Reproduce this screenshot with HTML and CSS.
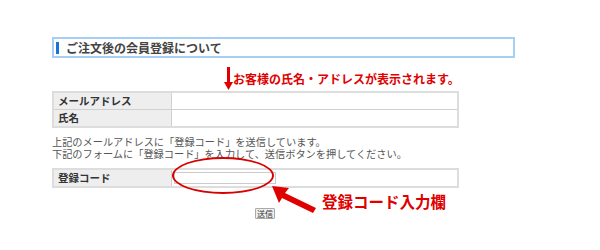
FILE: index.html
```html
<!DOCTYPE html>
<html lang="ja">
<head>
<meta charset="utf-8">
<link rel="stylesheet" href="styles.css">
</head>
<body>
<div class="page">
  <h2 class="title"><span class="bar"></span>ご注文後の会員登録について</h2>
  <div class="note">
    <svg class="down" width="9" height="24" viewBox="0 0 9 24"><rect x="3" y="0" width="3" height="17" fill="#e00000"/><polygon points="0,15 9,15 4.5,23" fill="#e00000"/></svg>
    <span class="note-text">お客様の氏名・アドレスが表示されます。</span>
  </div>
  <table class="info">
    <tr><th>メールアドレス</th><td></td></tr>
    <tr><th>氏名</th><td></td></tr>
  </table>
  <p class="desc">上記のメールアドレスに「登録コード」を送信しています。<br>下記のフォームに「登録コード」を入力して、送信ボタンを押してください。</p>
  <div class="code-area">
    <table class="info code">
      <tr><th>登録コード</th><td><span class="input"></span></td></tr>
    </table>
    <span class="ellipse"></span>
    <svg class="big-arrow" width="46" height="28" viewBox="0 0 46 28"><polygon points="0,0 17,2 13,7 44,22 41,27 10,12 7,17" fill="#e00000"/></svg>
    <span class="code-label">登録コード入力欄</span>
    <div class="btn-row"><button class="send">送信</button></div>
  </div>
</div>
</body>
</html>
```
FILE: styles.css
```css
html, body { margin: 0; padding: 0; background: #fff; }
body { font-family: "Noto Sans CJK JP", "Noto Sans", sans-serif; color: #333; }
.page { padding: 37px 0 0 52px; width: 463px; }
.title {
  margin: 0; height: 17px; border: 2px solid #a6cff5;
  display: flex; align-items: center;
  font-size: 12px; font-weight: bold; color: #444; line-height: 17px;
}
.bar { width: 3px; height: 12px; background: #1a73d9; margin: 0 7px 0 2px; }
.note { display: flex; align-items: flex-start; margin: 9px 0 0 172px; height: 24px; }
.down { display: block; margin-top: 0; }
.note-text { color: #e00000; font-weight: bold; font-size: 12px; line-height: 14px; margin: 5px 0 0 0; white-space: nowrap; }
.info { border-collapse: collapse; width: 407px; border: 2px solid #ddd; }
.info th, .info td { border: 1px solid #d0d0d0; height: 16px; padding: 0 4px; font-size: 10.5px; line-height: 14px; }
.info th { width: 109px; background: #eee; text-align: left; font-weight: bold; color: #333; }
.info td { background: #fff; }
.desc { margin: 8px 0 0; font-size: 10.2px; line-height: 12px; color: #555; white-space: nowrap; }
.code-area { position: relative; margin-top: 8px; }
.code th, .code td { height: 16px; }
.code td { padding: 0 2px; }
.input { display: block; width: 100px; height: 10px; border: 1px solid #ccc; background: #fff; }
.ellipse { position: absolute; left: 120px; top: -11px; width: 98px; height: 33px; border: 2px solid #d80000; border-radius: 50%; }
.big-arrow { position: absolute; left: 220px; top: 18px; }
.code-label { position: absolute; left: 270px; top: 23px; color: #e00000; font-weight: bold; font-size: 15.5px; line-height: 20px; white-space: nowrap; }
.btn-row { padding: 10px 0 0 203px; }
.send { font: 8px/9px "Noto Sans CJK JP", sans-serif; padding: 0 1px; border: 1px solid #aaa; background: #eee; color: #333; border-radius: 1px; height: 11px; }
```
